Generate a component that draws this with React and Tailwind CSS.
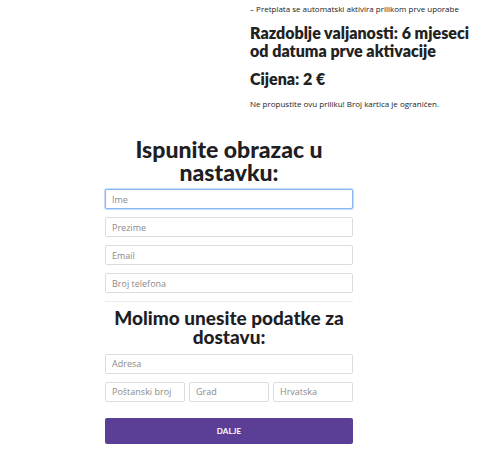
export default function App() {
  const inputCls =
    "h-[20px] w-full rounded-[2px] border border-[#dcdcdc] bg-white px-[6px] text-[9px] text-[#333] placeholder:text-[#8a8a8a] outline-none";
  return (
    <div className="w-[484px] h-[450px] bg-white overflow-hidden" style={{ fontFamily: '"Open Sans", "Noto Sans", sans-serif' }}>
      <div className="ml-[250px] w-[228px] pt-[3px] text-[#222]">
        <p className="text-[8px] leading-[12px]">– Pretplata se automatski aktivira prilikom prve uporabe</p>
        <p className="mt-[9px] text-[16px] leading-[18px] font-extrabold" style={{ fontFamily: 'Lato, sans-serif' }}>Razdoblje valjanosti: 6 mjeseci od datuma prve aktivacije</p>
        <p className="mt-[9px] text-[16px] leading-[20px] font-extrabold" style={{ fontFamily: 'Lato, sans-serif' }}>Cijena: 2 €</p>
        <p className="mt-[9px] text-[8px] leading-[12px]">Ne propustite ovu priliku! Broj kartica je ograničen.</p>
      </div>
      <div className="ml-[105px] w-[248px] mt-[28px]">
        <h2 className="text-center text-[23px] leading-[23px] font-black text-[#1e1e24] px-[18px]" style={{ fontFamily: 'Lato, sans-serif' }}>
          Ispunite obrazac u nastavku:
        </h2>
        <div className="mt-[5px] flex flex-col gap-[8px]">
          <input className="h-[20px] w-full rounded-[2px] border border-[#88b8f5] shadow-[0_0_0_1px_#c5ddfb] bg-white px-[6px] text-[9px] placeholder:text-[#8a8a8a] outline-none" placeholder="Ime" />
          <input className={inputCls} placeholder="Prezime" />
          <input className={inputCls} placeholder="Email" />
          <input className={inputCls} placeholder="Broj telefona" />
        </div>
        <div className="mt-[8px] h-px bg-[#ececec]" />
        <h2 className="mt-[6px] text-center text-[19px] leading-[19px] font-black text-[#1e1e24]" style={{ fontFamily: 'Lato, sans-serif' }}>
          Molimo unesite podatke za dostavu:
        </h2>
        <div className="mt-[3px]">
          <input className={inputCls} placeholder="Adresa" />
        </div>
        <div className="mt-[8px] grid grid-cols-3 gap-[4px]">
          <input className={inputCls} placeholder="Poštanski broj" />
          <input className={inputCls} placeholder="Grad" />
          <input className={inputCls} placeholder="Hrvatska" />
        </div>
        <button className="mt-[16px] h-[26px] w-full rounded-[2px] bg-[#5b3e96] text-white text-[8px] font-bold tracking-[0.2px]" style={{ fontFamily: 'Lato, sans-serif' }}>
          DALJE
        </button>
      </div>
    </div>
  );
}
